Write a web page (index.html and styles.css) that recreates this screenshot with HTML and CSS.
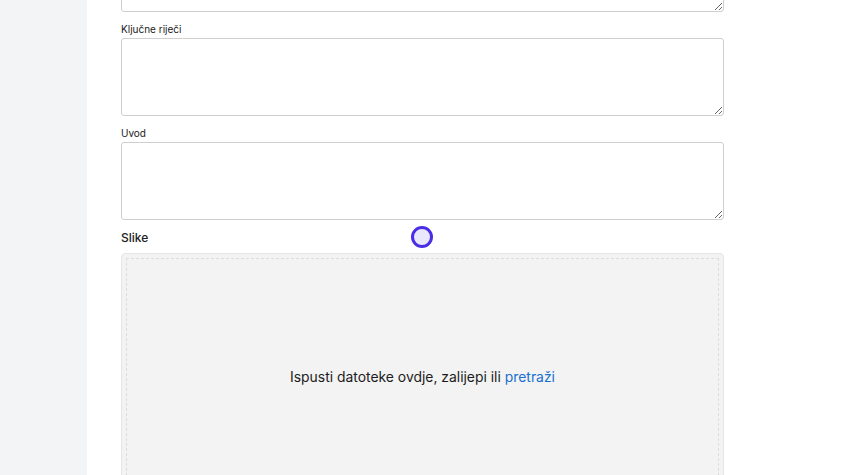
FILE: index.html
```html
<!DOCTYPE html>
<html lang="hr">
<head>
    <meta charset="UTF-8">
    <meta name="viewport" content="width=device-width, initial-scale=1.0">
    <title>Novi članak</title>
    <link rel="stylesheet" href="styles.css">
</head>
<body>
    <div class="layout">
        <aside class="sidebar"></aside>
        <main class="main">
            <form class="form">
                <!-- polje iznad (odrezano) -->
                <div class="field">
                    <textarea class="input"></textarea>
                </div>
                <div class="field">
                    <label class="label" for="kljucne">Ključne riječi</label>
                    <textarea class="input" id="kljucne"></textarea>
                </div>
                <div class="field">
                    <label class="label" for="uvod">Uvod</label>
                    <textarea class="input" id="uvod"></textarea>
                </div>
                <div class="field">
                    <h3 class="section">Slike</h3>
                    <div class="dropzone">
                        <div class="dropzone-inner">
                            <span>Ispusti datoteke ovdje, zalijepi ili <a class="link">pretraži</a></span>
                        </div>
                    </div>
                </div>
            </form>
        </main>
    </div>
    <div class="cursor"></div>
</body>
</html>
```

FILE: styles.css
```css
body {
    margin: 0;
    padding: 0;
    background-color: #ffffff;
    font-family: Inter, "Liberation Sans", sans-serif;
    color: #111111;
    overflow: hidden;
}

.layout {
    display: flex;
    min-height: 100vh;
}

.sidebar {
    width: 87px;
    flex-shrink: 0;
    background-color: #f3f4f6;
}

.main {
    flex: 1;
    padding-left: 34px;
}

.form {
    width: 603px;
    margin-top: -66px;
    display: flex;
    flex-direction: column;
    gap: 10px;
}

.field {
    display: flex;
    flex-direction: column;
}

.label {
    font-size: 10px;
    line-height: 14px;
    margin-bottom: 2px;
    color: #1a1a1a;
}

.input {
    box-sizing: border-box;
    height: 78px;
    width: 100%;
    border: 1px solid #cfcfcf;
    border-radius: 3px;
    resize: vertical;
    margin: 0;
    font-family: inherit;
}

.section {
    margin: 0 0 7px 0;
    font-size: 12px;
    line-height: 16px;
    font-weight: 500;
    color: #222222;
}

.dropzone {
    box-sizing: border-box;
    height: 248px;
    background-color: #f3f3f3;
    border: 1px solid #e6e6e6;
    border-radius: 4px;
    padding: 4px;
}

.dropzone-inner {
    height: 100%;
    box-sizing: border-box;
    border: 1px dashed #dcdcdc;
    display: flex;
    align-items: center;
    justify-content: center;
    font-size: 13.9px;
    color: #1c1c1c;
}

.link {
    color: #1a6fd1;
    cursor: pointer;
}

/* kursor snimke */
.cursor {
    position: absolute;
    left: 411px;
    top: 226px;
    width: 22px;
    height: 22px;
    box-sizing: border-box;
    border: 3px solid #4a2ee6;
    border-radius: 50%;
    background-color: #e9e7fb;
}
```
